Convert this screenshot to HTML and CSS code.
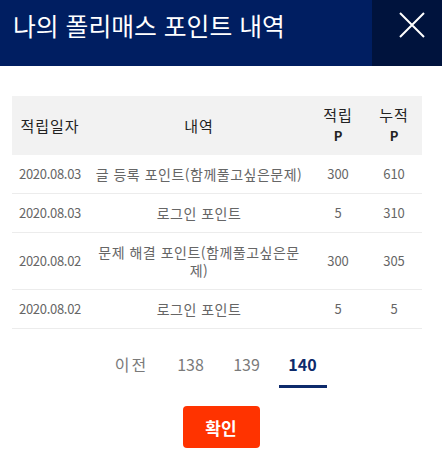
FILE: index.html
```html
<!DOCTYPE html>
<html lang="ko">

<head>
  <meta charset="UTF-8">
  <meta name="viewport" content="width=device-width, initial-scale=1.0">
  <title>나의 폴리매스 포인트 내역</title>
  <link rel="stylesheet" href="styles.css">
</head>

<body>
  <div class="header">
    <h1>나의 폴리매스 포인트 내역</h1>
    <button class="close" aria-label="닫기">
      <svg width="26" height="26" viewBox="0 0 26 26">
        <path d="M1 1 L25 25 M25 1 L1 25" stroke="#fff" stroke-width="2" fill="none" />
      </svg>
    </button>
  </div>

  <div class="content">
    <table class="points">
      <colgroup>
        <col class="c-date">
        <col class="c-desc">
        <col class="c-num">
        <col class="c-num">
      </colgroup>
      <thead>
        <tr>
          <th>적립일자</th>
          <th>내역</th>
          <th>적립<br><b>P</b></th>
          <th>누적<br><b>P</b></th>
        </tr>
      </thead>
      <tbody>
        <tr>
          <td class="date">2020.08.03</td>
          <td class="desc">글 등록 포인트(함께풀고싶은문제)</td>
          <td>300</td>
          <td>610</td>
        </tr>
        <tr>
          <td class="date">2020.08.03</td>
          <td class="desc">로그인 포인트</td>
          <td>5</td>
          <td>310</td>
        </tr>
        <tr>
          <td class="date">2020.08.02</td>
          <td class="desc">문제 해결 포인트(함께풀고싶은문제)</td>
          <td>300</td>
          <td>305</td>
        </tr>
        <tr>
          <td class="date">2020.08.02</td>
          <td class="desc">로그인 포인트</td>
          <td>5</td>
          <td>5</td>
        </tr>
      </tbody>
    </table>

    <div class="pager">
      <a href="#" class="prev">이전</a>
      <a href="#">138</a>
      <a href="#">139</a>
      <a href="#" class="active">140</a>
    </div>

    <button class="ok">확인</button>
  </div>
</body>

</html>
```

FILE: styles.css
```css
body {
  margin: 0;
  padding: 0;
  font-family: "Noto Sans CJK KR", "Noto Sans", sans-serif;
  background-color: #fff;
}

.header {
  display: flex;
  height: 66px;
  background-color: #001e61;
}

.header h1 {
  flex: 1;
  margin: 0;
  padding: 0 0 0 13px;
  line-height: 50px;
  font-size: 24.8px;
  font-weight: normal;
  color: #fff;
}

.close {
  width: 70px;
  border: none;
  background-color: #00133d;
  padding: 12px 0 0 9px;
  display: flex;
  justify-content: center;
  align-items: flex-start;
  cursor: pointer;
}

.content {
  padding: 30px 20px 0 12px;
  display: flex;
  flex-direction: column;
  align-items: center;
}

.points {
  width: 410px;
  border-collapse: collapse;
  table-layout: fixed;
}

.c-date {
  width: 76px;
}

.c-desc {
  width: 222px;
}

.c-num {
  width: 56px;
}

.points th {
  background-color: #f2f2f2;
  height: 59px;
  padding: 0;
  font-size: 15px;
  font-weight: normal;
  letter-spacing: 1px;
  color: #222;
  line-height: 20px;
}

.points th b {
  font-weight: bold;
  font-size: 13px;
  letter-spacing: 0;
}

.points td {
  text-align: center;
  font-size: 13px;
  color: #666;
  padding: 10px 5px;
  line-height: 18px;
  border-bottom: 1px solid #ececec;
}

.points td.date {
  padding: 10px 0;
  letter-spacing: -0.3px;
}

.points td.desc {
  font-size: 14px;
  letter-spacing: 0.5px;
}

.pager {
  display: flex;
  gap: 8px;
  margin-top: 23px;
}

.pager a {
  min-width: 48px;
  text-align: center;
  color: #7a7a7a;
  text-decoration: none;
  font-size: 16px;
  padding: 0 0 9px 0;
}

.pager a.prev {
  letter-spacing: 2px;
  margin-right: 3px;
}

.pager a.active {
  color: #0d2a6b;
  font-weight: bold;
  border-bottom: 3px solid #0d2a6b;
}

.ok {
  margin-top: 18px;
  margin-left: 8px;
  width: 77px;
  height: 42px;
  border: none;
  border-radius: 4px;
  background-color: #ff3300;
  color: #fff;
  font-family: "Noto Sans CJK KR", sans-serif;
  font-size: 17px;
  font-weight: bold;
  cursor: pointer;
}
```
